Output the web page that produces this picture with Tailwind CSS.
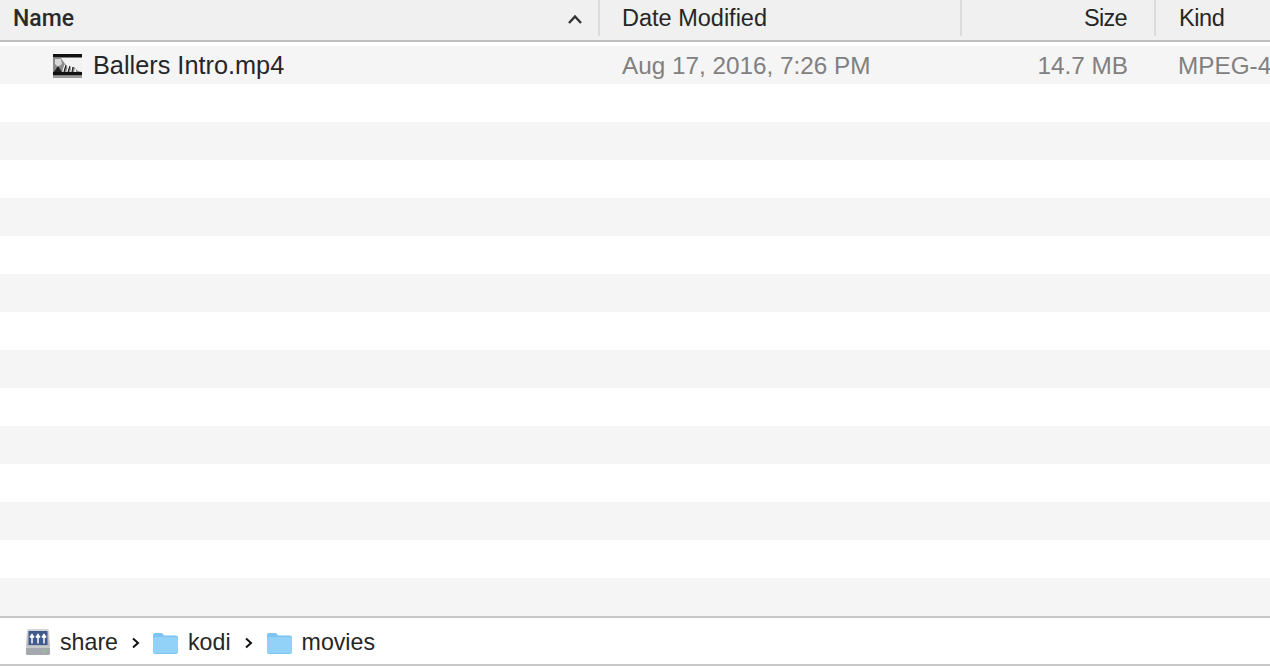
<!DOCTYPE html>
<html lang="en">
<head>
    <meta charset="UTF-8">
    <title>movies</title>
    <script src="https://cdn.jsdelivr.net/npm/@tailwindcss/browser@4"></script>
</head>
<body class="w-[1270px] h-[666px] overflow-hidden bg-white font-['Liberation_Sans',Arial,sans-serif] text-[24.3px] text-[#262626]">
  <!-- column headers -->
  <div class="h-[42px] bg-[#f0f0f0] border-b-2 border-[#bfbfbf] grid grid-cols-[600px_362px_194px_1fr] text-[23.5px]">
    <div class="h-[36px] pt-[2px] border-r-2 border-[#dcdcdc] flex items-center justify-between pl-[13px] pr-[15px]">
      <span class="font-['Roboto',sans-serif] font-medium text-[23px] text-[#2a2a2a]">Name</span>
      <svg class="w-[16px] h-[10px]" viewBox="0 0 16 10" fill="none" stroke="#333" stroke-width="2.4"><path d="M2 9 L8 2.5 L14 9"/></svg>
    </div>
    <div class="h-[36px] pt-[2px] border-r-2 border-[#dcdcdc] flex items-center pl-[22px]">Date Modified</div>
    <div class="h-[36px] pt-[2px] border-r-2 border-[#dcdcdc] flex items-center justify-end pr-[27px] tracking-[-0.7px]">Size</div>
    <div class="h-[36px] pt-[2px] flex items-center pl-[23px] tracking-[-0.4px]">Kind</div>
  </div>

  <!-- rows -->
  <div class="pt-[4px]">
    <div class="h-[38px] bg-[#f5f5f5] grid grid-cols-[600px_362px_194px_1fr] items-center overflow-hidden">
      <div class="flex items-center pl-[52px] gap-[10px]">
        <svg class="w-[31px] h-[28px]" viewBox="0 0 31 28">
          <defs>
            <filter id="soft"><feGaussianBlur stdDeviation="0.6"/></filter>
          </defs>
          <rect x="1" y="24.500" width="29" height="2.500" fill="#999" filter="url(#soft)"/>
          <rect x="1" y="3" width="29" height="22" fill="#f2f2f2"/>
          <g filter="url(#soft)">
            <path d="M1 21 V7 H9 L13 13 L16 17 L22 16 L26 20 L30 21 Z" fill="#8a8a8a"/>
            <path d="M3 8 H9 L10 13 L6 16 L3 13 Z" fill="#d8d8d8"/>
            <path d="M1 22 L6 15 L10 21 Z" fill="#222"/>
            <path d="M11 21 L13 14 M15 21 L17 15 M19 21 L20 16 M23 21 L23.500 18" stroke="#fff" stroke-width="1.600"/>
            <path d="M12 21 L14 14 M16 21 L18 15 M20 21 L21 16" stroke="#222" stroke-width="1.200"/>
          </g>
          <rect x="1" y="3" width="29" height="3.500" fill="#111"/>
          <rect x="1" y="21" width="29" height="3.500" fill="#111"/>
        </svg>
        <span class="text-[25.3px] pt-[1px]">Ballers Intro.mp4</span>
      </div>
      <div class="pl-[22px] pt-[1px] text-[#808080]">Aug 17, 2016, 7:26 PM</div>
      <div class="text-right pr-[28px] pt-[1px] text-[#808080]">14.7 MB</div>
      <div class="pl-[22px] pt-[1px] text-[#808080] whitespace-nowrap">MPEG-4</div>
    </div>
    <div class="h-[38px]"></div>
    <div class="h-[38px] bg-[#f5f5f5]"></div>
    <div class="h-[38px]"></div>
    <div class="h-[38px] bg-[#f5f5f5]"></div>
    <div class="h-[38px]"></div>
    <div class="h-[38px] bg-[#f5f5f5]"></div>
    <div class="h-[38px]"></div>
    <div class="h-[38px] bg-[#f5f5f5]"></div>
    <div class="h-[38px]"></div>
    <div class="h-[38px] bg-[#f5f5f5]"></div>
    <div class="h-[38px]"></div>
    <div class="h-[38px] bg-[#f5f5f5]"></div>
    <div class="h-[38px]"></div>
    <div class="h-[38px] bg-[#f5f5f5]"></div>
  </div>

  <!-- path bar -->
  <div class="h-[50px] pt-[3px] border-y-2 border-[#c8c8c8] flex items-center pl-[25px] text-[23.2px]">
    <svg class="w-[26px] h-[28px] -mt-[2px]" viewBox="0 0 26 28">
      <defs>
        <linearGradient id="drive" x1="0" y1="0" x2="0" y2="1">
          <stop offset="0" stop-color="#d4d6da"/>
          <stop offset="1" stop-color="#b4b6ba"/>
        </linearGradient>
      </defs>
      <path d="M2 3 Q2 1 4 1 H22 Q24 1 24 3 L25 19 H1 Z" fill="url(#drive)"/>
      <rect x="3.500" y="3" width="19" height="14" rx="0.500" fill="#3f5a8c"/>
      <path d="M7 15.500 V7 M13 15.500 V7 M19 15.500 V7 M5 9.500 L7 6.500 L9 9.500 M11 9.500 L13 6.500 L15 9.500 M17 9.500 L19 6.500 L21 9.500" stroke="#fff" stroke-width="1.500" fill="none"/>
      <rect x="1" y="18.500" width="24" height="8.500" rx="1.500" fill="#a5a8ac"/>
      <rect x="1" y="18.500" width="24" height="1" fill="#e6e6e6"/>
      <rect x="18" y="22.500" width="3" height="1.500" fill="#7fd07f"/>
    </svg>
    <span class="ml-[9px]">share</span>
    <svg class="w-[9px] h-[12px] ml-[13px]" viewBox="0 0 9 12" fill="none" stroke="#111" stroke-width="2"><path d="M2 1.5 L7 6 L2 10.5"/></svg>
    <svg class="w-[27px] h-[22px] ml-[12px]" viewBox="0 0 27 22">
      <path d="M1 3 Q1 1 3 1 H9 Q10.500 1 11 2 L12 3.500 H24 Q26 3.500 26 5.500 V20 Q26 22 24 22 H3 Q1 22 1 20 Z" fill="#7cc4f2"/>
      <rect x="1" y="5" width="25" height="16" rx="1.500" fill="#93d2f8"/>
    </svg>
    <span class="ml-[9px]">kodi</span>
    <svg class="w-[9px] h-[12px] ml-[13px]" viewBox="0 0 9 12" fill="none" stroke="#111" stroke-width="2"><path d="M2 1.5 L7 6 L2 10.5"/></svg>
    <svg class="w-[27px] h-[22px] ml-[13px]" viewBox="0 0 27 22">
      <path d="M1 3 Q1 1 3 1 H9 Q10.500 1 11 2 L12 3.500 H24 Q26 3.500 26 5.500 V20 Q26 22 24 22 H3 Q1 22 1 20 Z" fill="#7cc4f2"/>
      <rect x="1" y="5" width="25" height="16" rx="1.500" fill="#93d2f8"/>
    </svg>
    <span class="ml-[9px]">movies</span>
  </div>
</body>
</html>
